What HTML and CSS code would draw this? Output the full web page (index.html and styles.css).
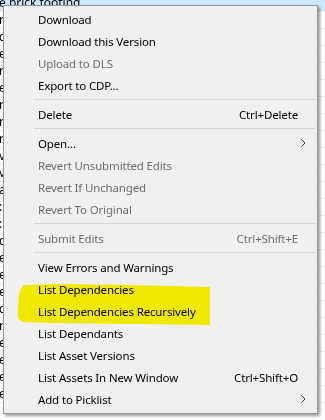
FILE: index.html
```html
<!DOCTYPE html>
<html lang="en">
<head>
  <meta charset="UTF-8">
  <title>Asset context menu</title>
  <link rel="stylesheet" href="styles.css">
</head>
<body>
  <!-- list behind the menu -->
  <div class="list">
    <div class="row selected">e brick footing</div>
    <div class="row">r</div>
    <div class="row">c</div>
    <div class="row">e</div>
    <div class="row">r</div>
    <div class="row">e</div>
    <div class="row">r</div>
    <div class="row">r</div>
    <div class="row">r</div>
    <div class="row">v</div>
    <div class="row">v</div>
    <div class="row">a</div>
    <div class="row">:</div>
    <div class="row">:</div>
    <div class="row">c</div>
    <div class="row">e</div>
    <div class="row">e</div>
    <div class="row">e</div>
    <div class="row">c</div>
    <div class="row">r</div>
    <div class="row">e</div>
    <div class="row">e</div>
    <div class="row">e</div>
    <div class="row">e</div>
  </div>

  <div class="menu">
    <div class="item"><span class="label">Download</span></div>
    <div class="item"><span class="label">Download this Version</span></div>
    <div class="item disabled"><span class="label">Upload to DLS</span></div>
    <div class="item"><span class="label">Export to CDP...</span></div>
    <div class="sep"></div>
    <div class="item"><span class="label">Delete</span><span class="key">Ctrl+Delete</span></div>
    <div class="sep"></div>
    <div class="item"><span class="label">Open...</span><span class="sub"><svg width="5" height="8" viewBox="0 0 5 8"><polyline points="0.5,0.5 4,4 0.5,7.5" fill="none" stroke="#333" stroke-width="1"/></svg></span></div>
    <div class="item disabled"><span class="label">Revert Unsubmitted Edits</span></div>
    <div class="item disabled"><span class="label">Revert If Unchanged</span></div>
    <div class="item disabled"><span class="label">Revert To Original</span></div>
    <div class="sep"></div>
    <div class="item disabled"><span class="label">Submit Edits</span><span class="key">Ctrl+Shift+E</span></div>
    <div class="sep"></div>
    <div class="item"><span class="label">View Errors and Warnings</span></div>
    <div class="item"><span class="label">List Dependencies</span></div>
    <div class="item"><span class="label">List Dependencies Recursively</span></div>
    <div class="item"><span class="label">List Dependants</span></div>
    <div class="item"><span class="label">List Asset Versions</span></div>
    <div class="item"><span class="label">List Assets In New Window</span><span class="key">Ctrl+Shift+O</span></div>
    <div class="item"><span class="label">Add to Picklist</span><span class="sub"><svg width="5" height="8" viewBox="0 0 5 8"><polyline points="0.5,0.5 4,4 0.5,7.5" fill="none" stroke="#333" stroke-width="1"/></svg></span></div>

    <!-- yellow marker scribble over the two items -->
    <svg class="marker" width="194" height="42" viewBox="0 0 194 42">
      <path d="M7 1 C40 -1 120 1 193 3 L193 41 C130 40 60 40 8 38 C1 37 0 33 1 26 C2 18 0 7 7 1 Z" fill="#fff700"/>
    </svg>
  </div>
</body>
</html>
```

FILE: styles.css
```css
body {
    margin: 0;
    background-color: #fff;
    font-family: "Noto Sans", "Open Sans", sans-serif;
    overflow: hidden;
}

.list {
    margin-top: -5px;
    margin-left: -1px;
}

.row {
    height: 16px;
    line-height: 16px;
    font-size: 12px;
    color: #000;
    border-bottom: 1px solid #f0f0f0;
}

.row.selected {
    background-color: #cce8ff;
}

.menu {
    position: absolute;
    top: 5px;
    left: 3px;
    width: 313px;
    padding: 2px 0 3px;
    background-color: #f0f0f0;
    border: 1px solid #979797;
    box-shadow: 2px 2px 3px rgba(0, 0, 0, 0.4);
    font-size: 11.5px;
    letter-spacing: -0.15px;
    color: #000;
}

.item {
    display: flex;
    align-items: center;
    height: 22px;
    padding-left: 34px;
}

.item.disabled {
    color: #6d6d6d;
}

.label {
    flex: 1;
    white-space: nowrap;
}

.key {
    padding-right: 19px;
}

.sub {
    display: flex;
    width: 20px;
    margin-right: 11px;
    justify-content: flex-end;
}

.sep {
    height: 1px;
    margin: 3px 2px 3px 30px;
    background-color: #d7d7d7;
}

.marker {
    position: absolute;
    left: 13px;
    top: 278px;
    mix-blend-mode: multiply;
}
```
